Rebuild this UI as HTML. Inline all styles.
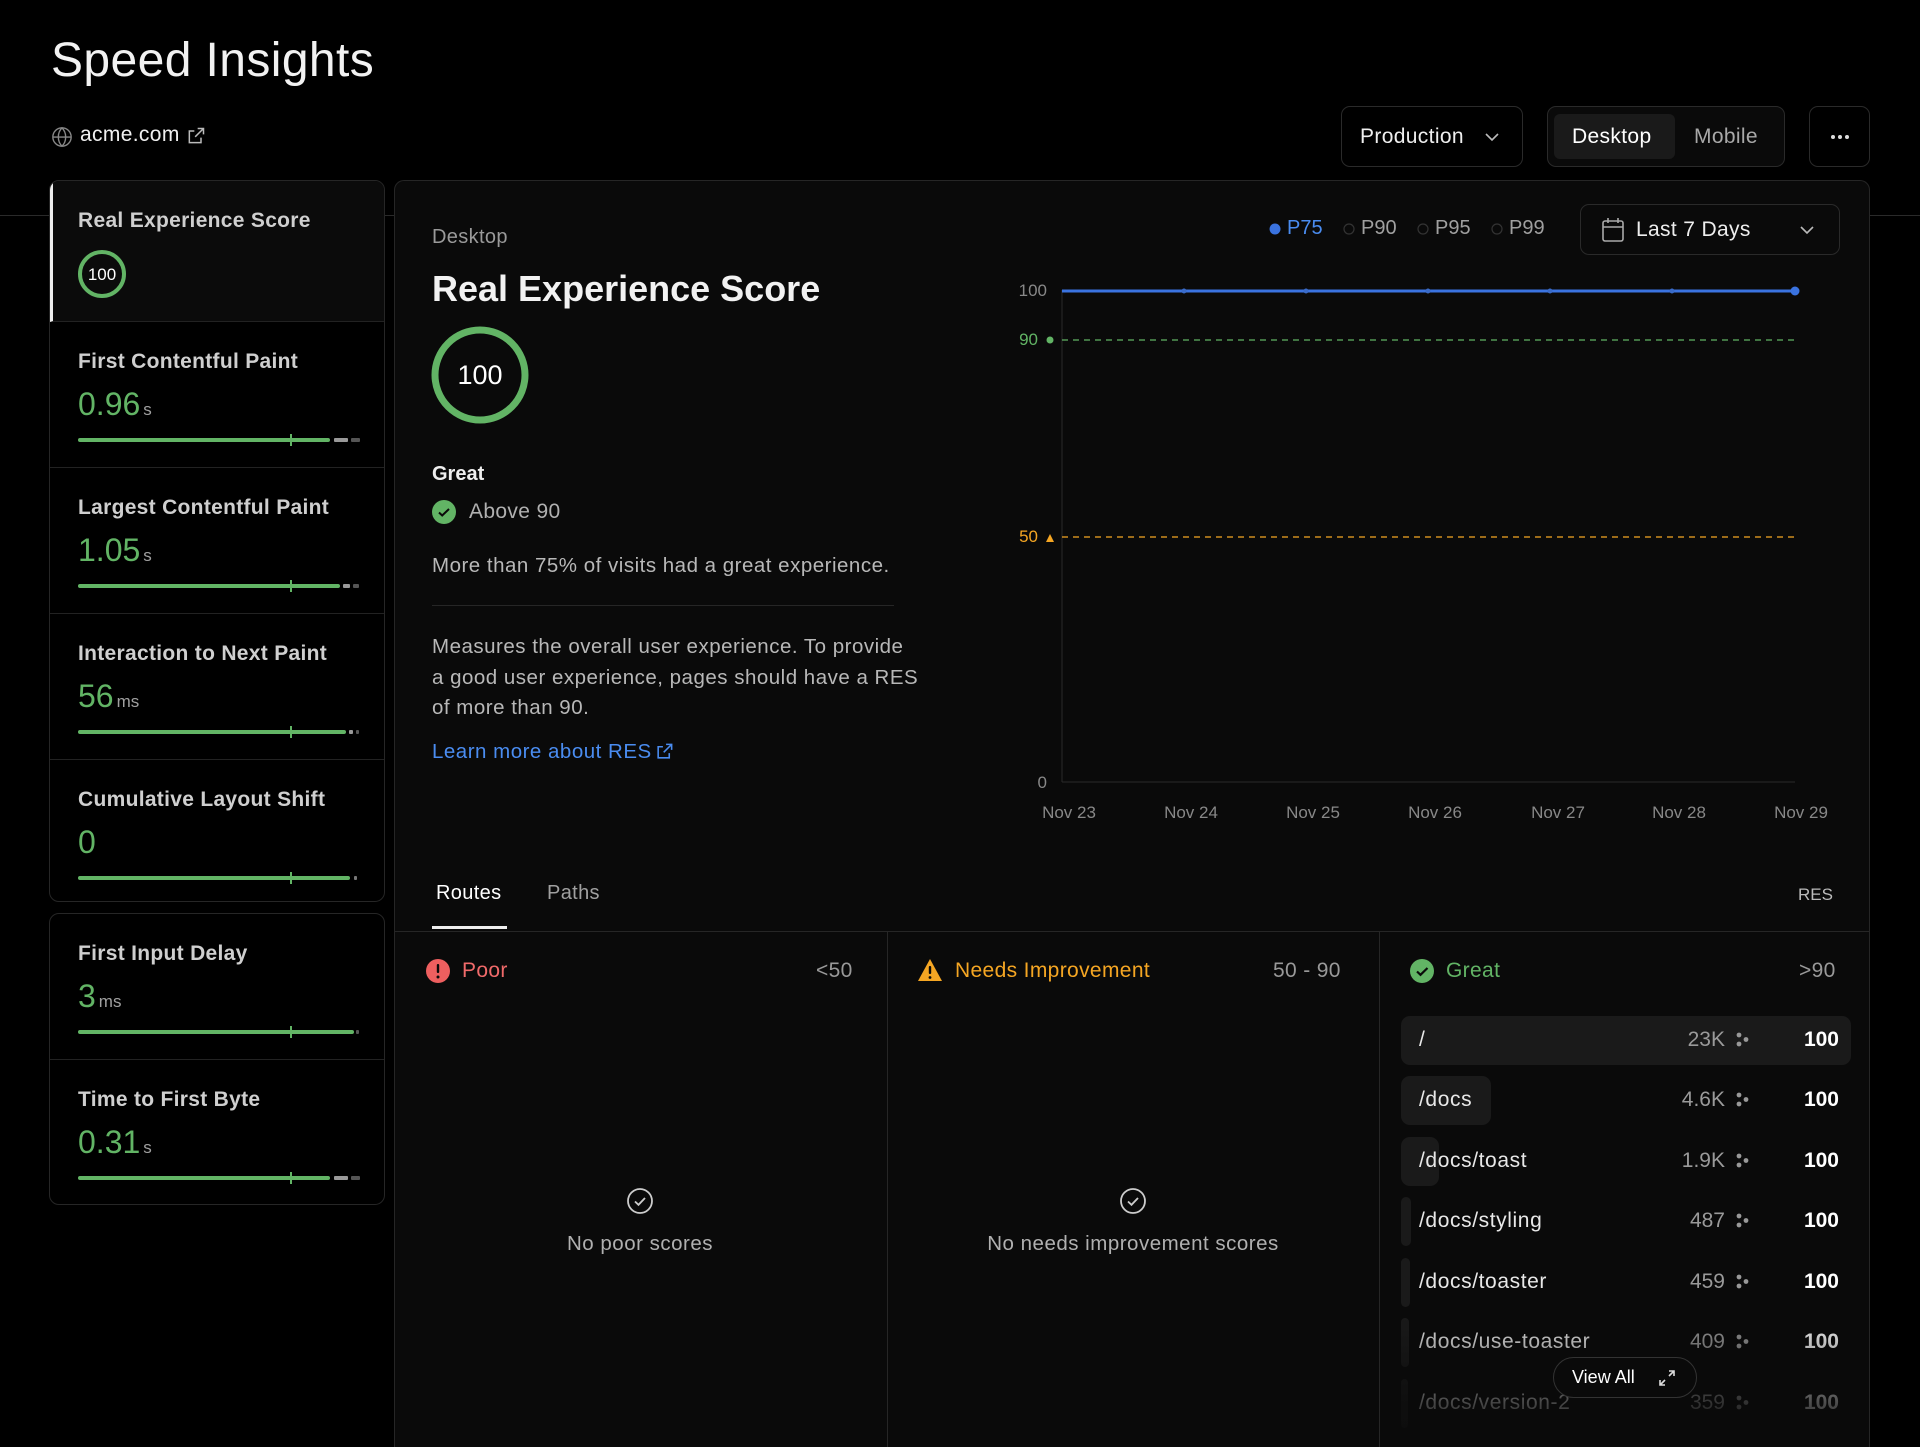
<!DOCTYPE html>
<html style="width:1920px;height:1447px;overflow:hidden"><head><meta charset="utf-8"><style>
*{box-sizing:border-box;margin:0;padding:0}
body{width:1920px;height:1447px;background:#000;color:#ededed;font-family:"Liberation Sans",sans-serif;position:relative;overflow:hidden}
.a{position:absolute}
.btn{position:absolute;border:1px solid #2a2a2a;border-radius:9px;background:#000}
.card{position:absolute;border:1px solid #262626;border-radius:10px;background:#000;overflow:hidden}
.item{position:absolute;left:0;right:0;border-bottom:1px solid #222}
.lab{position:absolute;left:28px;font-size:21px;color:#cfcfcf;font-weight:600;letter-spacing:.3px}
.val{position:absolute;left:28px;font-size:32px;color:#62b465}
.val small{font-size:17px;color:#a0a0a0;margin-left:3px}
.bar{position:absolute;left:28px;height:4px;background:#62b465;border-radius:2px}
.tick{position:absolute;width:2px;height:12px;background:#62b465}
.g{position:absolute;height:4px;background:#777;border-radius:1px}
.row{position:absolute;left:1401px;width:450px;height:49px;font-size:21px}
.row .bg{position:absolute;left:0;top:0;height:49px;background:#1a1a1a;border-radius:9px}
.row .r{position:absolute;left:18px;top:12px;color:#e8e8e8;letter-spacing:.6px}
.row .c{position:absolute;right:126px;top:12px;color:#9a9a9a}
.row .d{position:absolute;left:335px;top:16px}
.row .s{position:absolute;right:12px;top:12px;font-weight:bold;color:#fff}
.t{letter-spacing:.35px}
</style></head><body>
<div class="a" style="left:51px;top:33px;font-size:48px;color:#f2f2f2;letter-spacing:.4px">Speed Insights</div>
<svg class="a" style="left:51px;top:126px" width="22" height="22" viewBox="0 0 24 24" fill="none" stroke="#888" stroke-width="1.5"><circle cx="12" cy="12" r="10"/><path d="M2 12h20M12 2c3 3 4 6.5 4 10s-1 7-4 10c-3-3-4-6.5-4-10s1-7 4-10z"/></svg>
<div class="a t" style="left:80px;top:123px;font-size:21px;color:#f0f0f0">acme.com</div>
<svg class="a" style="left:186px;top:126px" width="20" height="20" viewBox="0 0 24 24" fill="none" stroke="#bbb" stroke-width="1.8"><path d="M14 3h7v7M21 3l-10 10M18 14v6H4V6h6"/></svg>

<div class="a" style="left:0;top:215px;width:1920px;height:1px;background:#2a2a2a"></div>

<div class="btn" style="left:1341px;top:106px;width:182px;height:61px"><span class="a t" style="left:18px;top:18px;font-size:21px;color:#eee">Production</span><svg class="a" style="left:142px;top:24px" width="16" height="12" viewBox="0 0 16 12" fill="none" stroke="#bbb" stroke-width="1.6"><path d="M2 3l6 6 6-6"/></svg></div>
<div class="btn" style="left:1547px;top:106px;width:238px;height:61px;background:#0a0a0a"><div class="a" style="left:6px;top:7px;width:121px;height:45px;background:#1a1a1a;border-radius:6px"></div><span class="a t" style="left:24px;top:18px;font-size:21px;color:#fff">Desktop</span><span class="a t" style="left:146px;top:18px;font-size:21px;color:#a8a8a8">Mobile</span></div>
<div class="btn" style="left:1809px;top:106px;width:61px;height:61px"><svg class="a" style="left:20px;top:27px" width="20" height="6"><circle cx="3" cy="3" r="2" fill="#ddd"/><circle cx="10" cy="3" r="2" fill="#ddd"/><circle cx="17" cy="3" r="2" fill="#ddd"/></svg></div>

<!-- sidebar -->
<div class="card" style="left:49px;top:180px;width:336px;height:722px">
 <div class="item" style="top:0;height:141px;background:#0b0b0b;border-left:3px solid #eee">
  <div class="lab" style="left:25px;top:28px">Real Experience Score</div>
  <svg class="a" style="left:24px;top:68px" width="50" height="50"><circle cx="25" cy="25" r="22" fill="none" stroke="#62b465" stroke-width="4"/><text x="25" y="31" text-anchor="middle" font-size="17" fill="#fff" font-family="Liberation Sans">100</text></svg>
 </div>
 <div class="item" style="top:141px;height:146px">
  <div class="lab" style="top:28px">First Contentful Paint</div>
  <div class="val" style="top:64px">0.96<small>s</small></div>
  <div class="bar" style="top:116px;width:252px"></div><div class="tick" style="left:240px;top:112px"></div><div class="g" style="left:284px;top:116px;width:14px;background:#999"></div><div class="g" style="left:301px;top:116px;width:9px;background:#555"></div>
 </div>
 <div class="item" style="top:287px;height:146px">
  <div class="lab" style="top:28px">Largest Contentful Paint</div>
  <div class="val" style="top:64px">1.05<small>s</small></div>
  <div class="bar" style="top:116px;width:262px"></div><div class="tick" style="left:240px;top:112px"></div><div class="g" style="left:293px;top:116px;width:7px;background:#999"></div><div class="g" style="left:303px;top:116px;width:6px;background:#555"></div>
 </div>
 <div class="item" style="top:433px;height:146px">
  <div class="lab" style="top:28px">Interaction to Next Paint</div>
  <div class="val" style="top:64px">56<small>ms</small></div>
  <div class="bar" style="top:116px;width:268px"></div><div class="tick" style="left:240px;top:112px"></div><div class="g" style="left:299px;top:116px;width:4px;background:#999"></div><div class="g" style="left:306px;top:116px;width:3px;background:#555"></div>
 </div>
 <div class="item" style="top:579px;height:143px;border-bottom:none">
  <div class="lab" style="top:28px">Cumulative Layout Shift</div>
  <div class="val" style="top:64px">0</div>
  <div class="bar" style="top:116px;width:272px"></div><div class="tick" style="left:240px;top:112px"></div><div class="g" style="left:304px;top:116px;width:3px;background:#777"></div>
 </div>
</div>
<div class="card" style="left:49px;top:913px;width:336px;height:292px">
 <div class="item" style="top:0;height:146px">
  <div class="lab" style="top:28px">First Input Delay</div>
  <div class="val" style="top:64px">3<small>ms</small></div>
  <div class="bar" style="top:116px;width:276px"></div><div class="tick" style="left:240px;top:112px"></div><div class="g" style="left:306px;top:116px;width:3px;background:#555"></div>
 </div>
 <div class="item" style="top:146px;height:146px;border-bottom:none">
  <div class="lab" style="top:28px">Time to First Byte</div>
  <div class="val" style="top:64px">0.31<small>s</small></div>
  <div class="bar" style="top:116px;width:252px"></div><div class="tick" style="left:240px;top:112px"></div><div class="g" style="left:284px;top:116px;width:14px;background:#999"></div><div class="g" style="left:301px;top:116px;width:9px;background:#555"></div>
 </div>
</div>

<!-- main card -->
<div class="card" style="left:394px;top:180px;width:1476px;height:1267px;background:#0a0a0a;border-bottom:none;border-radius:10px 10px 0 0"></div>
<div class="a t" style="left:432px;top:226px;font-size:20px;color:#9a9a9a">Desktop</div>
<div class="a" style="left:432px;top:268px;font-size:36px;font-weight:bold;color:#f2f2f2">Real Experience Score</div>
<svg class="a" style="left:430px;top:325px" width="100" height="100"><circle cx="50" cy="50" r="45" fill="none" stroke="#62b465" stroke-width="7"/><text x="50" y="59" text-anchor="middle" font-size="27" fill="#fff" font-family="Liberation Sans">100</text></svg>
<div class="a" style="left:432px;top:463px;font-size:20px;font-weight:bold;color:#eee">Great</div>
<svg class="a" style="left:432px;top:500px" width="24" height="24"><circle cx="12" cy="12" r="12" fill="#62b465"/><path d="M7 12.5l3.2 3L17 9" fill="none" stroke="#0a0a0a" stroke-width="2"/></svg>
<div class="a t" style="left:469px;top:500px;font-size:21px;color:#b0b0b0">Above 90</div>
<div class="a t" style="left:432px;top:554px;font-size:20.5px;color:#b8b8b8;letter-spacing:.5px">More than 75% of visits had a great experience.</div>
<div class="a" style="left:432px;top:605px;width:462px;height:1px;background:#262626"></div>
<div class="a t" style="left:432px;top:632px;white-space:nowrap;font-size:20.5px;line-height:30.6px;color:#b8b8b8;letter-spacing:.5px">Measures the overall user experience. To provide<br>a good user experience, pages should have a RES<br>of more than 90.</div>
<div class="a t" style="left:432px;top:740px;font-size:20.5px;color:#4a8cf0;letter-spacing:.5px">Learn more about RES</div>
<svg class="a" style="left:655px;top:742px" width="19" height="19" viewBox="0 0 24 24" fill="none" stroke="#4a8cf0" stroke-width="2"><path d="M14 3h7v7M21 3l-10 10M18 14v6H4V6h6"/></svg>

<!-- legend -->
<svg class="a" style="left:1268px;top:222px" width="14" height="14"><circle cx="7" cy="7" r="5.5" fill="#3a73e0"/></svg>
<div class="a" style="left:1287px;top:217px;font-size:20px;color:#4a8cf0">P75</div>
<svg class="a" style="left:1342px;top:222px" width="14" height="14"><circle cx="7" cy="7" r="5" fill="none" stroke="#333" stroke-width="1.2"/></svg>
<div class="a" style="left:1361px;top:217px;font-size:20px;color:#a0a0a0">P90</div>
<svg class="a" style="left:1416px;top:222px" width="14" height="14"><circle cx="7" cy="7" r="5" fill="none" stroke="#333" stroke-width="1.2"/></svg>
<div class="a" style="left:1435px;top:217px;font-size:20px;color:#a0a0a0">P95</div>
<svg class="a" style="left:1490px;top:222px" width="14" height="14"><circle cx="7" cy="7" r="5" fill="none" stroke="#333" stroke-width="1.2"/></svg>
<div class="a" style="left:1509px;top:217px;font-size:20px;color:#a0a0a0">P99</div>
<div class="btn" style="left:1580px;top:204px;width:260px;height:51px;background:#0a0a0a"><svg class="a" style="left:20px;top:12px" width="24" height="26" viewBox="0 0 24 26" fill="none" stroke="#aaa" stroke-width="1.6"><rect x="2" y="4" width="20" height="20" rx="2"/><path d="M2 10h20M7 1v5M17 1v5"/></svg><span class="a t" style="left:55px;top:13px;font-size:21px;color:#eee">Last 7 Days</span><svg class="a" style="left:218px;top:19px" width="16" height="12" viewBox="0 0 16 12" fill="none" stroke="#bbb" stroke-width="1.6"><path d="M2 3l6 6 6-6"/></svg></div>

<!-- chart -->
<svg class="a" style="left:1000px;top:270px" width="860" height="560" font-family="Liberation Sans" font-size="17">
 <line x1="62" y1="20" x2="62" y2="512" stroke="#2a2a2a"/>
 <line x1="62" y1="512" x2="795" y2="512" stroke="#2a2a2a"/>
 <text x="47" y="26" text-anchor="end" fill="#888">100</text>
 <text x="38" y="75" text-anchor="end" fill="#62b465">90</text><circle cx="50" cy="70" r="3.5" fill="#62b465"/>
 <text x="38" y="272" text-anchor="end" fill="#f5a623">50</text><path d="M46 272l4-8 4 8z" fill="#f5a623"/>
 <text x="47" y="518" text-anchor="end" fill="#888">0</text>
 <line x1="62" y1="70" x2="795" y2="70" stroke="#62b465" stroke-dasharray="6 5" stroke-width="1.3"/>
 <line x1="62" y1="267" x2="795" y2="267" stroke="#f5a623" stroke-dasharray="6 5" stroke-width="1.3"/>
 <line x1="62" y1="21" x2="795" y2="21" stroke="#3a73e0" stroke-width="3"/>
 <g fill="#3a6bc8"><circle cx="184" cy="21" r="2.5"/><circle cx="306" cy="21" r="2.5"/><circle cx="428" cy="21" r="2.5"/><circle cx="550" cy="21" r="2.5"/><circle cx="672" cy="21" r="2.5"/></g>
 <circle cx="795" cy="21" r="4.5" fill="#3a73e0"/>
 <g fill="#888" text-anchor="middle"><text x="69" y="548">Nov 23</text><text x="191" y="548">Nov 24</text><text x="313" y="548">Nov 25</text><text x="435" y="548">Nov 26</text><text x="558" y="548">Nov 27</text><text x="679" y="548">Nov 28</text><text x="801" y="548">Nov 29</text></g>
</svg>

<!-- tabs -->
<div class="a t" style="left:436px;top:882px;font-size:20px;color:#fff">Routes</div>
<div class="a" style="left:432px;top:926px;width:75px;height:3px;background:#eee"></div>
<div class="a t" style="left:547px;top:882px;font-size:20px;color:#a0a0a0">Paths</div>
<div class="a" style="left:1798px;top:885px;font-size:17px;color:#bbb">RES</div>
<div class="a" style="left:395px;top:931px;width:1474px;height:1px;background:#262626"></div>
<div class="a" style="left:887px;top:932px;width:1px;height:515px;background:#262626"></div>
<div class="a" style="left:1379px;top:932px;width:1px;height:515px;background:#262626"></div>

<svg class="a" style="left:425px;top:958px" width="26" height="26"><circle cx="13" cy="13" r="12" fill="#ee5f5f"/><rect x="11.8" y="6" width="2.4" height="9" rx="1" fill="#0a0a0a"/><circle cx="13" cy="19" r="1.5" fill="#0a0a0a"/></svg>
<div class="a t" style="left:462px;top:959px;font-size:21px;color:#f06a6a">Poor</div>
<div class="a t" style="left:816px;top:959px;font-size:21px;color:#999">&lt;50</div>
<svg class="a" style="left:917px;top:957px" width="26" height="26"><path d="M13 2L25 24H1z" fill="#f5a623"/><rect x="11.8" y="9" width="2.4" height="8" rx="1" fill="#0a0a0a"/><circle cx="13" cy="20.5" r="1.4" fill="#0a0a0a"/></svg>
<div class="a t" style="left:955px;top:959px;font-size:21px;color:#f5a623">Needs Improvement</div>
<div class="a t" style="left:1273px;top:959px;font-size:21px;color:#999">50 - 90</div>
<svg class="a" style="left:1409px;top:958px" width="26" height="26"><circle cx="13" cy="13" r="12" fill="#62b465"/><path d="M8 13.5l3.5 3.3L18.5 10" fill="none" stroke="#0a0a0a" stroke-width="2.2"/></svg>
<div class="a t" style="left:1446px;top:959px;font-size:21px;color:#62b465">Great</div>
<div class="a t" style="left:1799px;top:959px;font-size:21px;color:#999">&gt;90</div>

<svg class="a" style="left:626px;top:1187px" width="28" height="28" fill="none" stroke="#ccc" stroke-width="1.8"><circle cx="14" cy="14" r="12"/><path d="M9 14.5l3.5 3.3L19 11"/></svg>
<div class="a t" style="left:440px;top:1232px;width:400px;text-align:center;font-size:20.5px;color:#b0b0b0;letter-spacing:.5px">No poor scores</div>
<svg class="a" style="left:1119px;top:1187px" width="28" height="28" fill="none" stroke="#ccc" stroke-width="1.8"><circle cx="14" cy="14" r="12"/><path d="M9 14.5l3.5 3.3L19 11"/></svg>
<div class="a t" style="left:883px;top:1232px;width:500px;text-align:center;font-size:20.5px;color:#b0b0b0;letter-spacing:.5px">No needs improvement scores</div>

<!-- great rows -->
<div class="row" style="top:1016px"><div class="bg" style="width:450px"></div><span class="r">/</span><span class="c">23K</span><svg class="d" width="14" height="16"><circle cx="3" cy="3" r="2.4" fill="#999"/><circle cx="3" cy="12" r="2.4" fill="#999"/><circle cx="10" cy="7.5" r="2.4" fill="#999"/></svg><span class="s">100</span></div>
<div class="row" style="top:1076px"><div class="bg" style="width:90px"></div><span class="r">/docs</span><span class="c">4.6K</span><svg class="d" width="14" height="16"><circle cx="3" cy="3" r="2.4" fill="#999"/><circle cx="3" cy="12" r="2.4" fill="#999"/><circle cx="10" cy="7.5" r="2.4" fill="#999"/></svg><span class="s">100</span></div>
<div class="row" style="top:1137px"><div class="bg" style="width:38px"></div><span class="r">/docs/toast</span><span class="c">1.9K</span><svg class="d" width="14" height="16"><circle cx="3" cy="3" r="2.4" fill="#999"/><circle cx="3" cy="12" r="2.4" fill="#999"/><circle cx="10" cy="7.5" r="2.4" fill="#999"/></svg><span class="s">100</span></div>
<div class="row" style="top:1197px"><div class="bg" style="width:10px"></div><span class="r">/docs/styling</span><span class="c">487</span><svg class="d" width="14" height="16"><circle cx="3" cy="3" r="2.4" fill="#999"/><circle cx="3" cy="12" r="2.4" fill="#999"/><circle cx="10" cy="7.5" r="2.4" fill="#999"/></svg><span class="s">100</span></div>
<div class="row" style="top:1258px"><div class="bg" style="width:9px"></div><span class="r">/docs/toaster</span><span class="c">459</span><svg class="d" width="14" height="16"><circle cx="3" cy="3" r="2.4" fill="#999"/><circle cx="3" cy="12" r="2.4" fill="#999"/><circle cx="10" cy="7.5" r="2.4" fill="#999"/></svg><span class="s">100</span></div>
<div class="row" style="top:1318px"><div class="bg" style="width:8px"></div><span class="r">/docs/use-toaster</span><span class="c">409</span><svg class="d" width="14" height="16"><circle cx="3" cy="3" r="2.4" fill="#999"/><circle cx="3" cy="12" r="2.4" fill="#999"/><circle cx="10" cy="7.5" r="2.4" fill="#999"/></svg><span class="s">100</span></div>
<div class="row" style="top:1379px"><div class="bg" style="width:7px"></div><span class="r">/docs/version-2</span><span class="c">359</span><svg class="d" width="14" height="16"><circle cx="3" cy="3" r="2.4" fill="#999"/><circle cx="3" cy="12" r="2.4" fill="#999"/><circle cx="10" cy="7.5" r="2.4" fill="#999"/></svg><span class="s">100</span></div>
<div class="a" style="left:1380px;top:1310px;width:489px;height:137px;background:linear-gradient(rgba(10,10,10,0),rgba(10,10,10,.75) 70%,rgba(10,10,10,.85))"></div>
<div class="a" style="left:1553px;top:1357px;width:144px;height:41px;border:1px solid #333;border-radius:21px;background:#0a0a0a"><span class="a" style="left:18px;top:9px;font-size:18px;color:#fff">View All</span><svg class="a" style="left:103px;top:10px" width="20" height="20" viewBox="0 0 20 20" fill="none" stroke="#ddd" stroke-width="1.6"><path d="M12 3h5v5M17 3l-5 5M8 17H3v-5M3 17l5-5"/></svg></div>
</body></html>
